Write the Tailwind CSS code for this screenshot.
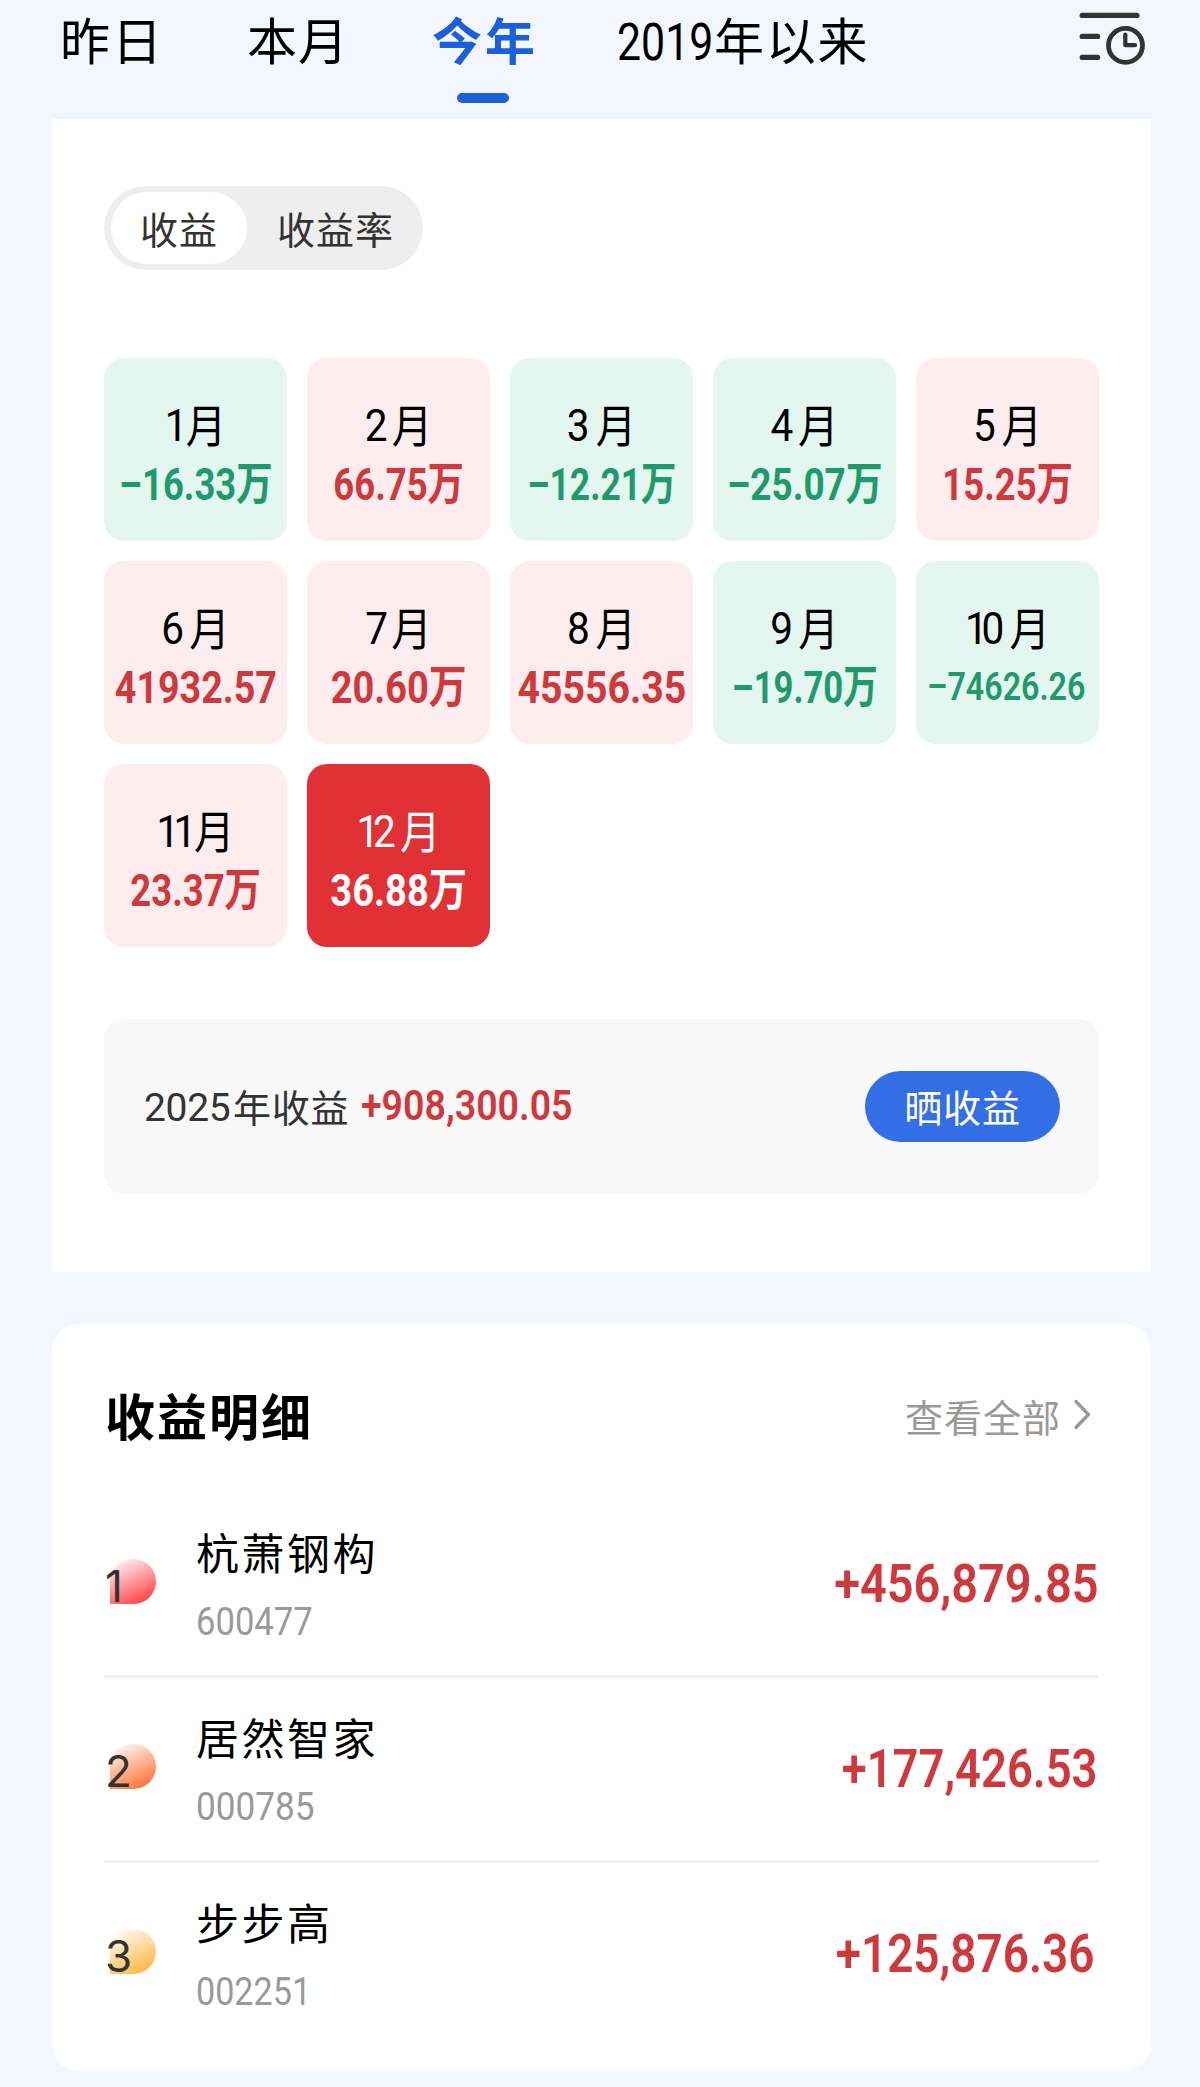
<!DOCTYPE html>
<html lang="zh-CN">
<head>
<meta charset="utf-8">
<title>收益</title>
<script src="https://cdn.jsdelivr.net/npm/@tailwindcss/browser@4"></script>
</head>
<body class="w-[1200px] h-[2087px] overflow-hidden bg-[#f3f6fe] text-black font-[Roboto,'Noto_Sans_CJK_SC',sans-serif] whitespace-nowrap">

<!-- Period tabs -->
<header class="flex h-[119px] pl-[60px] pr-[55px] text-[50px] leading-[86px]">
  <div class="w-[187px] tracking-[2px]">昨日</div>
  <div class="w-[185px] tracking-[1px]">本月</div>
  <div class="w-[185px] flex flex-col text-[#1c5fdb]">
    <div class="font-bold tracking-[3px]">今年</div>
    <div class="ml-[25px] mt-[7px] w-[52px] h-[10px] rounded-[5px] bg-[#1c5fdb]"></div>
  </div>
  <div class="flex">
    <div class="w-[97px]"><span class="inline-block origin-left scale-x-[.824] text-[52px]">2019</span></div>
    <div class="tracking-[1.8px]">年以来</div>
  </div>
  <svg class="ml-auto mt-[10px] w-[67px] h-[58px]" viewBox="0 0 67 58" fill="none" stroke="#333" stroke-width="5.2" stroke-linecap="round">
    <path d="M4.2 5.4H59"/>
    <path d="M4.2 26.4H19.6"/>
    <path d="M4.2 47.4H19.6"/>
    <circle cx="47.5" cy="35.4" r="17" stroke-width="4.8"/>
    <path d="M47.3 24.5V35.2H57" stroke-width="4.2" stroke-linejoin="round"/>
  </svg>
</header>

<!-- Monthly profit calendar -->
<section class="mx-[52px] w-[1099px] h-[1153px] bg-white px-[52px] pt-[67px]">
  <div class="flex w-[319px] h-[84px] rounded-full bg-[#eeeeee] p-[6px] pl-[7px] text-[38px] tracking-[1px] text-[#333]">
    <div class="w-[136px] rounded-full bg-white pl-[29px] pt-[5px] leading-[68px]">收益</div>
    <div class="pl-[30px] pt-[5px] leading-[68px]">收益率</div>
  </div>

  <div class="mt-[88px] grid grid-cols-[repeat(5,183px)] gap-[20px] text-center text-[45px]">
    <div class="h-[183px] rounded-[20px] bg-[#e3f6ef] pt-[38px]">
      <div class="flex justify-center scale-x-90 leading-[60px]"><span class="tracking-[-2px]">1</span><span class="translate-y-[1.5px]">月</span></div>
      <div class="flex justify-center leading-[57px] font-bold text-[#209a6d]"><span class="scale-x-[.81]">–16.33万</span></div>
    </div>
    <div class="h-[183px] rounded-[20px] bg-[#fdedee] pt-[38px]">
      <div class="flex justify-center scale-x-90 leading-[60px]"><span class="tracking-[4.8px]">2</span><span class="translate-y-[1.5px]">月</span></div>
      <div class="flex justify-center leading-[57px] font-bold text-[#cf383c]"><span class="scale-x-[.81]">66.75万</span></div>
    </div>
    <div class="h-[183px] rounded-[20px] bg-[#e3f6ef] pt-[38px]">
      <div class="flex justify-center scale-x-90 leading-[60px]"><span class="tracking-[6.8px]">3</span><span class="translate-y-[1.5px]">月</span></div>
      <div class="flex justify-center leading-[57px] font-bold text-[#209a6d]"><span class="scale-x-[.787]">–12.21万</span></div>
    </div>
    <div class="h-[183px] rounded-[20px] bg-[#e3f6ef] pt-[38px]">
      <div class="flex justify-center scale-x-90 leading-[60px]"><span class="tracking-[5.2px]">4</span><span class="translate-y-[1.5px]">月</span></div>
      <div class="flex justify-center leading-[57px] font-bold text-[#209a6d]"><span class="scale-x-[.82]">–25.07万</span></div>
    </div>
    <div class="h-[183px] rounded-[20px] bg-[#fdedee] pt-[38px]">
      <div class="flex justify-center scale-x-90 leading-[60px]"><span class="tracking-[6.4px]">5</span><span class="translate-y-[1.5px]">月</span></div>
      <div class="flex justify-center leading-[57px] font-bold text-[#cf383c]"><span class="scale-x-[.81]">15.25万</span></div>
    </div>

    <div class="h-[183px] rounded-[20px] bg-[#fdedee] pt-[38px]">
      <div class="flex justify-center scale-x-90 leading-[60px]"><span class="tracking-[6px]">6</span><span class="translate-y-[1.5px]">月</span></div>
      <div class="flex justify-center leading-[57px] font-bold text-[#cf383c]"><span class="scale-x-[.837]">41932.57</span></div>
    </div>
    <div class="h-[183px] rounded-[20px] bg-[#fdedee] pt-[38px]">
      <div class="flex justify-center scale-x-90 leading-[60px]"><span class="tracking-[3.5px]">7</span><span class="translate-y-[1.5px]">月</span></div>
      <div class="flex justify-center leading-[57px] font-bold text-[#cf383c]"><span class="scale-x-[.843]">20.60万</span></div>
    </div>
    <div class="h-[183px] rounded-[20px] bg-[#fdedee] pt-[38px]">
      <div class="flex justify-center scale-x-90 leading-[60px]"><span class="tracking-[6.4px]">8</span><span class="translate-y-[1.5px]">月</span></div>
      <div class="flex justify-center leading-[57px] font-bold text-[#cf383c]"><span class="scale-x-[.87]">45556.35</span></div>
    </div>
    <div class="h-[183px] rounded-[20px] bg-[#e3f6ef] pt-[38px]">
      <div class="flex justify-center scale-x-90 leading-[60px]"><span class="tracking-[6px]">9</span><span class="translate-y-[1.5px]">月</span></div>
      <div class="flex justify-center leading-[57px] font-bold text-[#209a6d]"><span class="scale-x-[.77]">–19.70万</span></div>
    </div>
    <div class="h-[183px] rounded-[20px] bg-[#e3f6ef] pt-[38px]">
      <div class="flex justify-center scale-x-90 leading-[60px]"><span class="tracking-[-7px]">1</span><span class="tracking-[5.7px]">0</span><span class="translate-y-[1.5px]">月</span></div>
      <div class="flex justify-center leading-[56px] text-[39.5px] font-semibold text-[#209a6d]"><span class="-translate-x-[1px] scale-x-[.815]">–74626.26</span></div>
    </div>

    <div class="h-[183px] rounded-[20px] bg-[#fdedee] pt-[38px]">
      <div class="flex justify-center scale-x-90 leading-[60px]"><span class="tracking-[-6.5px]">1</span><span class="tracking-[-2.5px]">1</span><span class="translate-y-[1.5px]">月</span></div>
      <div class="flex justify-center leading-[57px] font-bold text-[#cf383c]"><span class="scale-x-[.81]">23.37万</span></div>
    </div>
    <div class="h-[183px] rounded-[20px] bg-[#e03136] pt-[38px] text-white">
      <div class="flex justify-center scale-x-90 leading-[60px]"><span class="tracking-[-7px]">1</span><span class="tracking-[4.6px]">2</span><span class="translate-y-[1.5px]">月</span></div>
      <div class="flex justify-center leading-[57px] font-bold"><span class="scale-x-[.848]">36.88万</span></div>
    </div>
  </div>

  <div class="mt-[72px] flex h-[175px] w-[995px] items-center rounded-[20px] bg-[#f8f8f8] pl-[40px] pr-[39px]">
    <div class="w-[89px] pt-[2px] text-[39px] leading-[60px] tracking-[-.3px] text-[#333]">2025</div>
    <div class="w-[128px] pt-[4px] text-[38px] leading-[60px] tracking-[.8px] text-[#333]">年收益</div>
    <div class="-mt-[2px] text-[42px] leading-[60px] font-semibold text-[#cf383c]"><span class="inline-block origin-left scale-x-[.893]">+908,300.05</span></div>
    <button class="ml-auto h-[71px] w-[195px] rounded-full bg-[#346ee7] pt-[5px] text-[38px] leading-[66px] tracking-[.8px] text-white">晒收益</button>
  </div>
</section>

<!-- Profit details -->
<section class="mx-[52px] mt-[52px] w-[1099px] h-[747px] rounded-[27px] bg-white px-[52px]">
  <div class="flex h-[169px] items-center pt-[21px] pl-[1px] pr-[8px]">
    <h2 class="text-[50px] leading-[60px] font-bold tracking-[2px]">收益明细</h2>
    <div class="ml-auto flex items-center text-[38px] leading-[60px] tracking-[1px] text-[#999]">查看全部
      <svg class="ml-[12px] -mt-[10px] w-[18px] h-[32px]" viewBox="0 0 18 32" fill="none" stroke="#999" stroke-width="3.4" stroke-linecap="round" stroke-linejoin="round"><path d="M3 3.5L15.5 16.5L3 29.5"/></svg>
    </div>
  </div>

  <div class="flex h-[185px] border-b-[3px] border-[#f1f1f1]">
    <div class="relative w-[92px]">
      <div class="ml-[6px] mt-[66px] h-[45px] w-[46px] rounded-full rounded-bl-none bg-linear-[155deg] from-[#fff0f0] from-10% to-[#ff4a50] to-85%"></div>
      <span class="absolute left-[1px] top-[63px] font-[Inter] text-[44px] leading-[60px] text-[#333]">1</span>
    </div>
    <div class="pt-[34px]">
      <div class="text-[43px] leading-[56px] tracking-[2.5px]">杭萧钢构</div>
      <div class="text-[39px] leading-[79px] text-[#999]"><span class="inline-block origin-left scale-x-[.887]">600477</span></div>
    </div>
    <div class="ml-auto text-[54px] leading-[182px] font-semibold text-[#cf383c]"><span class="inline-block origin-right scale-x-[.868]">+456,879.85</span></div>
  </div>

  <div class="flex h-[185px] border-b-[3px] border-[#f1f1f1]">
    <div class="relative w-[92px]">
      <div class="ml-[6px] mt-[66px] h-[45px] w-[46px] rounded-full rounded-bl-none bg-linear-[155deg] from-[#fff3ee] from-10% to-[#ff7a42] to-85%"></div>
      <span class="absolute left-[1px] top-[63px] font-[Inter] text-[44px] leading-[60px] text-[#333]">2</span>
    </div>
    <div class="pt-[34px]">
      <div class="text-[43px] leading-[56px] tracking-[2.5px]">居然智家</div>
      <div class="text-[39px] leading-[79px] text-[#999]"><span class="inline-block origin-left scale-x-[.9]">000785</span></div>
    </div>
    <div class="ml-auto pr-[1px] text-[54px] leading-[182px] font-semibold text-[#cf383c]"><span class="inline-block origin-right scale-x-[.84]">+177,426.53</span></div>
  </div>

  <div class="flex h-[185px]">
    <div class="relative w-[92px]">
      <div class="ml-[6px] mt-[66px] h-[45px] w-[46px] rounded-full rounded-bl-none bg-linear-[155deg] from-[#fffaf0] from-10% to-[#ffba4a] to-85%"></div>
      <span class="absolute left-[1px] top-[63px] font-[Inter] text-[44px] leading-[60px] text-[#333]">3</span>
    </div>
    <div class="pt-[34px]">
      <div class="text-[43px] leading-[56px] tracking-[2.5px]">步步高</div>
      <div class="text-[39px] leading-[79px] text-[#999]"><span class="inline-block origin-left scale-x-[.875]">002251</span></div>
    </div>
    <div class="ml-auto pr-[4px] text-[54px] leading-[182px] font-semibold text-[#cf383c]"><span class="inline-block origin-right scale-x-[.85]">+125,876.36</span></div>
  </div>
</section>
</body>
</html>
